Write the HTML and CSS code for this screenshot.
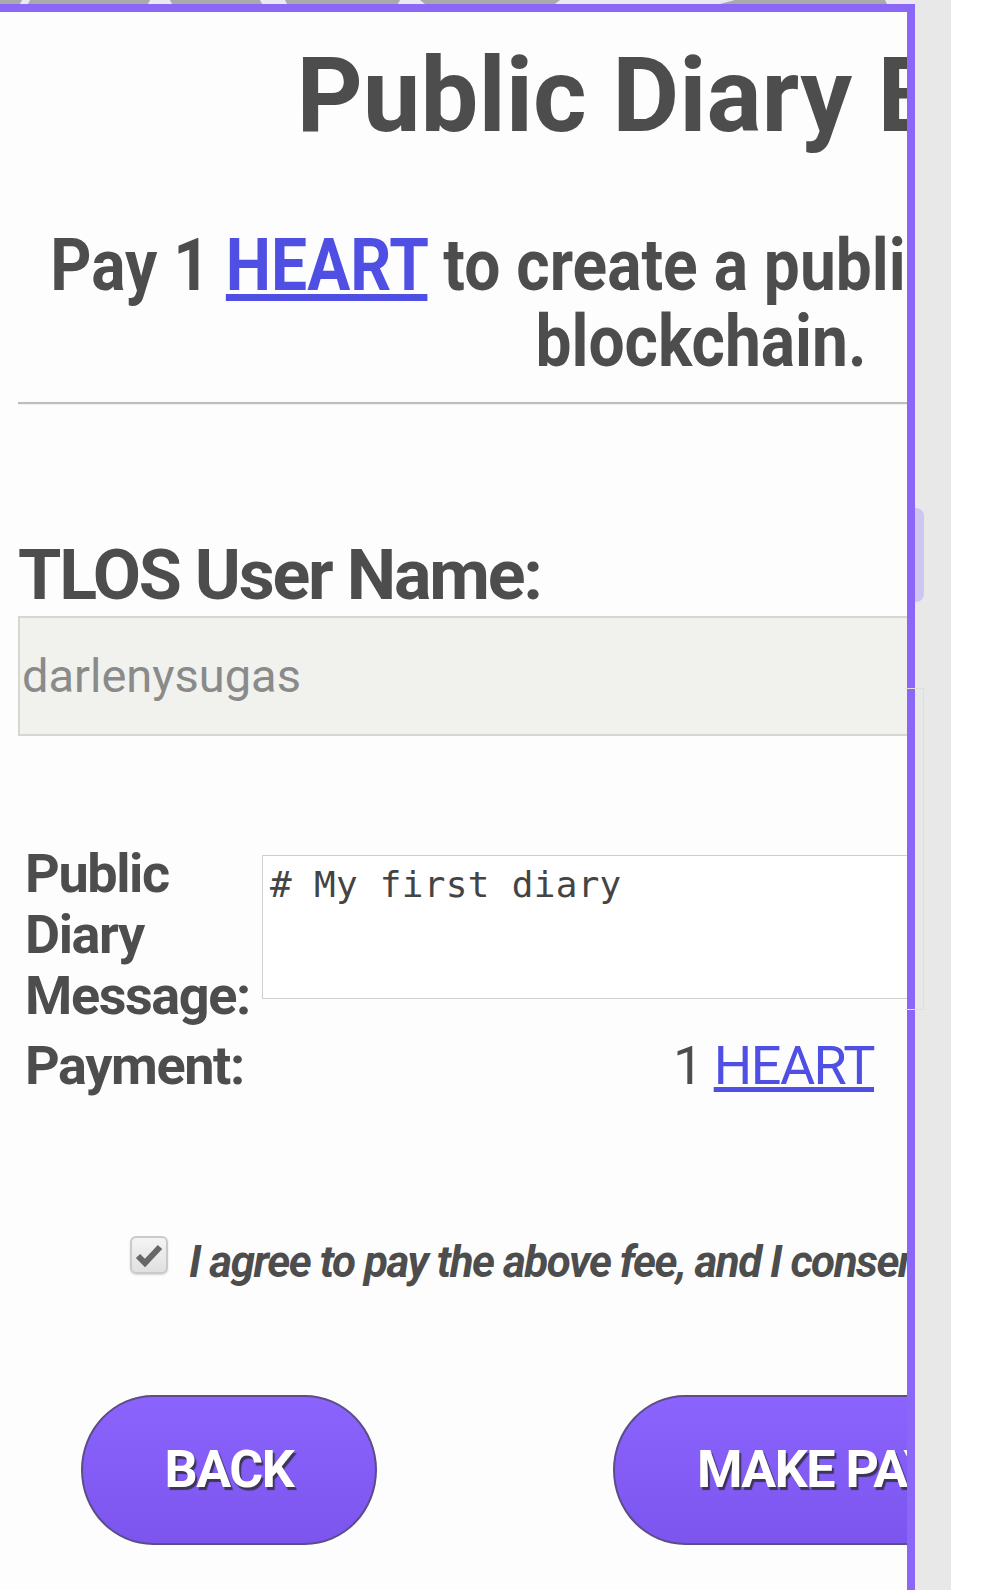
FILE: index.html
```html
<!DOCTYPE html>
<html lang="en">
<head>
    <meta charset="UTF-8">
    <meta name="viewport" content="width=device-width, initial-scale=1.0">
    <title>Public Diary</title>
    <link rel="stylesheet" href="styles.css">
</head>
<body>
    <div class="screen">
        <div class="page">
            <!-- bottom edge of the page behind the dialog -->
            <svg class="backdrop" width="915" height="4" viewBox="0 0 915 4">
                <rect width="915" height="4" fill="#ebe8f3"/>
                <polygon points="0,0 22,0 20,4 0,4" fill="#a9a9a9"/>
                <polygon points="30,0 150,0 148,4 28,4" fill="#a9a9a9"/>
                <polygon points="170,0 260,0 262,4 172,4" fill="#a9a9a9"/>
                <polygon points="285,0 400,0 398,4 287,4" fill="#a9a9a9"/>
                <polygon points="420,0 560,0 555,4 425,4" fill="#a9a9a9"/>
                <polygon points="735,0 885,0 887,4 720,4" fill="#a9a9a9"/>
            </svg>

            <div class="panel">
                <div class="content">
                    <h1 class="title">Public Diary Blog</h1>
                    <p class="intro">Pay 1 <a href="#">HEART</a> to create a public diary onto the blockchain.</p>
                    <hr class="divider">

                    <h2 class="field-label">TLOS User Name:</h2>
                    <input class="user-input" type="text" value="darlenysugas" readonly>

                    <div class="form-grid">
                        <div class="grid-label">Public Diary Message:</div>
                        <div><textarea class="message"># My first diary</textarea></div>
                        <div class="grid-label">Payment:</div>
                        <div class="amount">1 <a href="#">HEART</a></div>
                    </div>

                    <label class="agree">
                        <span class="checkbox">
                            <svg width="28" height="24" viewBox="0 0 28 24">
                                <path d="M3 13 L10 20 L25 4" fill="none" stroke="#676767" stroke-width="6"/>
                            </svg>
                        </span>
                        <span class="agree-text">I agree to pay the above fee, and I consent to record my diary publicly.</span>
                    </label>

                    <div class="actions">
                        <button class="btn btn-back">BACK</button>
                        <button class="btn btn-pay">MAKE PAYMENT</button>
                    </div>
                </div>
            </div>
        </div>
        <div class="gutter">
            <div class="thumb"></div>
            <div class="ghost-box"></div>
        </div>
    </div>
</body>
</html>
```

FILE: styles.css
```css
body {
    margin: 0;
    background-color: #fff;
    font-family: Roboto, "Liberation Sans", sans-serif;
    color: #4d4d4d;
    overflow: hidden;
}
.screen {
    display: flex;
    height: 1590px;
}
.page {
    width: 915px;
    display: flex;
    flex-direction: column;
}
.backdrop {
    display: block;
    flex: none;
}
.panel {
    flex: 1;
    box-sizing: border-box;
    border-top: 8px solid #8b67f5;
    border-right: 8px solid #8b67f5;
    background-color: #fdfdfd;
    overflow: hidden;
}
.content {
    width: 1358px;
    padding-left: 18px;
}
.title {
    margin: 24px 0 0;
    padding-right: 10px;
    font-size: 103px;
    font-weight: bold;
    line-height: 1.172;
    text-align: center;
    white-space: nowrap;
}
/* condensed bold face: squeeze a wider box back to the content width */
.intro {
    width: 1526px;
    margin: 71px 0 0 -80px;
    font-size: 72px;
    font-weight: bold;
    line-height: 76px;
    text-align: center;
    transform: scaleX(0.89);
}
a {
    color: #4f4fe4;
    text-decoration: underline;
}
.divider {
    margin: 22px 0 0;
    height: 0;
    border: none;
    border-top: 2px solid #bdbdbd;
    border-bottom: 1px solid #f0f0f0;
}
.field-label {
    margin: 129px 0 0;
    font-size: 70px;
    font-weight: bold;
    line-height: 82px;
    letter-spacing: -2.2px;
}
.user-input {
    display: block;
    box-sizing: border-box;
    width: 100%;
    height: 120px;
    margin: 0;
    padding: 0 2px;
    border: 2px solid #d6d6d2;
    background-color: #f1f1ed;
    color: #8a8a8a;
    font-family: Roboto, "Liberation Sans", sans-serif;
    font-size: 47px;
    outline: none;
}
.form-grid {
    display: grid;
    grid-template-columns: 237px 1fr;
    row-gap: 9px;
    margin-top: 107px;
    padding-left: 7px;
}
.grid-label {
    font-size: 54px;
    font-weight: bold;
    line-height: 61px;
    letter-spacing: -1.4px;
}
.message {
    display: block;
    box-sizing: border-box;
    width: 1100px;
    height: 144px;
    margin: 12px 0 0;
    padding: 8px 7px;
    border: 1px solid #cfcfcf;
    background-color: #fff;
    color: #444;
    font-family: "DejaVu Sans Mono", monospace;
    font-size: 36px;
    letter-spacing: 0.3px;
    resize: none;
    outline: none;
}
.amount {
    width: 612px;
    font-size: 54px;
    line-height: 61px;
    letter-spacing: -1.5px;
    text-align: right;
}
.agree {
    display: flex;
    align-items: flex-start;
    margin-top: 139px;
    padding-left: 112px;
    white-space: nowrap;
}
.checkbox {
    flex: none;
    box-sizing: border-box;
    width: 38px;
    height: 38px;
    margin: 1px 21px 0 0;
    border: 2px solid #cacaca;
    border-radius: 6px;
    background: linear-gradient(#f4f4f4, #e0e0e0);
    display: flex;
    align-items: center;
    justify-content: center;
    box-shadow: 0 1px 2px rgba(0,0,0,0.15);
}
.agree-text {
    font-size: 44px;
    font-weight: bold;
    font-style: italic;
    line-height: 52px;
    letter-spacing: -1.5px;
    margin-top: 1px;
}
.actions {
    display: flex;
    margin-top: 107px;
    padding-left: 63px;
}
.btn {
    box-sizing: border-box;
    height: 150px;
    padding: 0;
    border: 2px solid #5c4c88;
    border-radius: 75px / 78px;
    background: linear-gradient(#8a64fd, #7b55ee);
    color: #fff;
    font-family: Roboto, "Liberation Sans", sans-serif;
    font-size: 52px;
    font-weight: bold;
    letter-spacing: -1.5px;
    text-shadow: 2px 3px 1px #3d3557;
    cursor: pointer;
}
.btn-back {
    width: 296px;
}
.btn-pay {
    width: 542px;
    margin-left: 236px;
    flex: none;
}
.gutter {
    position: relative;
    width: 36px;
    background-color: #e8e8e8;
}
.thumb {
    position: absolute;
    left: 0;
    top: 508px;
    width: 9px;
    height: 94px;
    border-radius: 0 8px 8px 0;
    background-color: #cec6f1;
}
.ghost-box {
    position: absolute;
    left: -10px;
    top: 688px;
    width: 18px;
    height: 320px;
    border: 1px solid #dedede;
    border-left: none;
}
```
